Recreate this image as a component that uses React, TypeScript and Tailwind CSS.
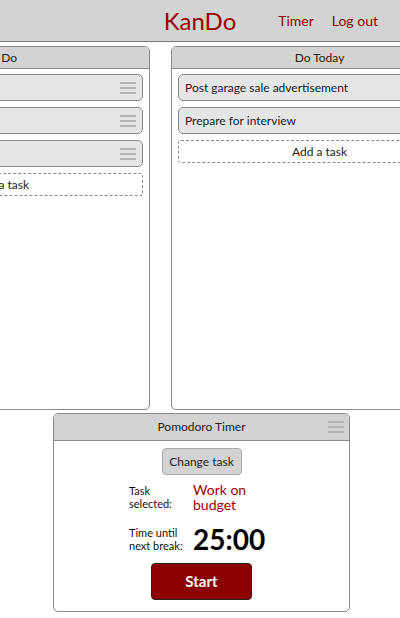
const font = { fontFamily: 'Lato, "Open Sans", sans-serif' };

function Burger({ className = '' }: { className?: string }) {
  return (
    <svg width="16" height="12" viewBox="0 0 16 12" className={className}>
      <rect x="0" y="0" width="16" height="2" fill="#b3b3b3" />
      <rect x="0" y="5" width="16" height="2" fill="#b3b3b3" />
      <rect x="0" y="10" width="16" height="2" fill="#b3b3b3" />
    </svg>
  );
}

function TaskCard({ title, handle }: { title: string; handle?: boolean }) {
  return (
    <div className="flex h-[27px] items-center justify-between rounded-[5px] border border-[#8a8a8a] bg-[#e6e6e6] px-[6px] text-[12px] text-[#222]">
      <span className="truncate">{title}</span>
      {handle && <Burger className="shrink-0" />}
    </div>
  );
}

function AddTask() {
  return (
    <div className="flex h-[23px] items-center justify-center rounded-[3px] border border-dashed border-[#8a8a8a] text-[12px] text-[#222]">
      Add a task
    </div>
  );
}

function Column({ title, children }: { title: string; children: React.ReactNode }) {
  return (
    <section className="flex h-[364px] w-[297px] shrink-0 flex-col overflow-hidden rounded-[5px] border border-[#8a8a8a] bg-white">
      <header className="flex h-[22px] shrink-0 items-center justify-center border-b border-[#8a8a8a] bg-[#d3d3d3] text-[12px] text-[#222]">
        {title}
      </header>
      <div className="flex flex-col gap-[6px] px-[6px] pt-[5px]">{children}</div>
    </section>
  );
}

export default function App() {
  return (
    <div className="h-[618px] w-[400px] overflow-hidden bg-white" style={font}>
      <header className="grid h-[42px] grid-cols-3 items-center border-b border-[#7a7a7a] bg-[#d3d3d3]">
        <div />
        <div className="text-center text-[24px] leading-none text-[#990000]">KanDo</div>
        <nav className="flex justify-end gap-[18px] pr-[22px] text-[14px] text-[#8b0000]">
          <span>Timer</span>
          <span>Log out</span>
        </nav>
      </header>

      <div className="ml-[-147px] mt-[4px] flex gap-[21px]">
        <Column title="To Do">
          <TaskCard title="Pay bills" handle />
          <TaskCard title="Clean garage" handle />
          <TaskCard title="Work on budget" handle />
          <AddTask />
        </Column>
        <Column title="Do Today">
          <TaskCard title="Post garage sale advertisement" />
          <TaskCard title="Prepare for interview" />
          <AddTask />
        </Column>
      </div>

      <section className="ml-[53px] mt-[3px] h-[199px] w-[297px] overflow-hidden rounded-[5px] border border-[#8a8a8a]">
        <header className="relative flex h-[27px] items-center justify-center border-b border-[#8a8a8a] bg-[#d3d3d3] text-[12px] text-[#222]">
          Pomodoro Timer
          <Burger className="absolute right-[5px] top-[7px]" />
        </header>
        <div className="flex flex-col items-center pt-[7px]">
          <button className="h-[27px] w-[80px] rounded-[4px] border border-[#aaa] bg-[#d3d3d3] text-[12px] text-[#222]">
            Change task
          </button>
        </div>
        <div className="mt-[7px] flex flex-col pl-[75px]">
          <div className="flex items-center">
            <div className="w-[64px] text-[11px] leading-[13px] text-[#111]">
              Task
              <br />
              selected:
            </div>
            <div className="text-[14px] leading-[15px] text-[#a00000]">
              <div>Work on</div>
              <div>budget</div>
            </div>
          </div>
          <div className="mt-[13px] flex items-center">
            <div className="w-[64px] text-[11px] leading-[13px] text-[#111]">
              Time until
              <br />
              next break:
            </div>
            <div className="text-[28px] font-bold leading-none text-black">25:00</div>
          </div>
        </div>
        <div className="mt-[10px] flex justify-center">
          <button className="h-[37px] w-[101px] rounded-[4px] border border-[#222] bg-[#8b0000] text-[15px] font-bold text-white">
            Start
          </button>
        </div>
      </section>
    </div>
  );
}
